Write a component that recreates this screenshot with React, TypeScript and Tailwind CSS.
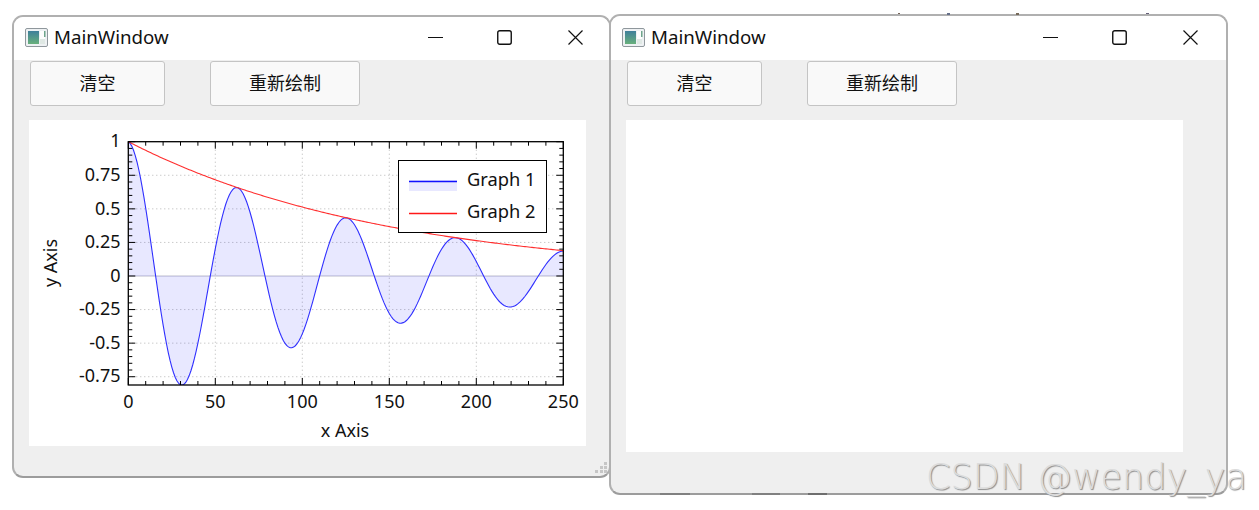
const FONT = "font-['Noto_Sans','Noto_Sans_CJK_SC',sans-serif]";

// plot geometry, in px inside the white plot area
const X0 = 99.3;
const X_SCALE = 1.74;
const Y_ONE = 21.7;
const Y_SCALE = 134.3;
const BOTTOM = 265;
const RIGHT = X0 + 250 * X_SCALE;

const px = (v: number) => X0 + v * X_SCALE;
const py = (v: number) => Y_ONE + (1 - v) * Y_SCALE;

function curve(fn: (i: number) => number) {
  const pts: string[] = [];
  for (let i = 0; i <= 250; i++) {
    pts.push(`${px(i).toFixed(2)},${py(fn(i)).toFixed(2)}`);
  }
  return pts;
}

const damped = (i: number) => Math.exp(-i / 150) * Math.cos(i / 10);
const envelope = (i: number) => Math.exp(-i / 150);

const xMajor = [0, 50, 100, 150, 200, 250];
const yMajor = [
  { v: 1, t: "1" },
  { v: 0.75, t: "0.75" },
  { v: 0.5, t: "0.5" },
  { v: 0.25, t: "0.25" },
  { v: 0, t: "0" },
  { v: -0.25, t: "-0.25" },
  { v: -0.5, t: "-0.5" },
  { v: -0.75, t: "-0.75" },
];
const xSub = Array.from({ length: 26 }, (_, i) => i * 10).filter((v) => v % 50 !== 0);
const ySub = Array.from({ length: 36 }, (_, i) => 1 - i * 0.05).filter(
  (v) => Math.abs(v * 4 - Math.round(v * 4)) > 0.01,
);

function Chart() {
  const blue = curve(damped);
  const fillPts = `${px(0)},${py(0)} ${blue.join(" ")} ${px(250)},${py(0)}`;
  return (
    <svg width="557" height="326" className="block" fontFamily="'Noto Sans','Noto Sans CJK SC',sans-serif" fontSize="18" fill="#111">
      <defs>
        <clipPath id="plot-clip">
          <rect x={X0} y={Y_ONE} width={RIGHT - X0} height={BOTTOM - Y_ONE} />
        </clipPath>
      </defs>

      {xMajor.slice(1, -1).map((v) => (
        <line key={v} x1={px(v)} x2={px(v)} y1={Y_ONE} y2={BOTTOM} stroke="#b4b4b4" strokeDasharray="1 3" />
      ))}
      {yMajor.slice(1).map(({ v }) => (
        <line key={v} x1={X0} x2={RIGHT} y1={py(v)} y2={py(v)} stroke={v === 0 ? "#bcbccc" : "#b4b4b4"} strokeDasharray={v === 0 ? undefined : "1 3"} />
      ))}

      <g clipPath="url(#plot-clip)">
        <polygon points={fillPts} fill="#0000ff" fillOpacity="0.09" />
        <polyline points={blue.join(" ")} fill="none" stroke="#2f2fff" strokeWidth="1.1" />
        <polyline points={curve(envelope).join(" ")} fill="none" stroke="#ff2f2f" strokeWidth="1.1" />
      </g>

      <rect x={X0} y={Y_ONE} width={RIGHT - X0} height={BOTTOM - Y_ONE} fill="none" stroke="#000" strokeWidth="1.3" />
      {xMajor.map((v) => (
        <g key={v} stroke="#000" strokeWidth="1">
          <line x1={px(v)} x2={px(v)} y1={BOTTOM} y2={BOTTOM - 7} />
          <line x1={px(v)} x2={px(v)} y1={Y_ONE} y2={Y_ONE + 7} />
        </g>
      ))}
      {xSub.map((v) => (
        <g key={v} stroke="#000" strokeWidth="1">
          <line x1={px(v)} x2={px(v)} y1={BOTTOM} y2={BOTTOM - 4} />
          <line x1={px(v)} x2={px(v)} y1={Y_ONE} y2={Y_ONE + 4} />
        </g>
      ))}
      {yMajor.map(({ v }) => (
        <g key={v} stroke="#000" strokeWidth="1">
          <line x1={X0} x2={X0 + 7} y1={py(v)} y2={py(v)} />
          <line x1={RIGHT} x2={RIGHT - 7} y1={py(v)} y2={py(v)} />
        </g>
      ))}
      {ySub.map((v) => (
        <g key={v} stroke="#000" strokeWidth="1">
          <line x1={X0} x2={X0 + 4} y1={py(v)} y2={py(v)} />
          <line x1={RIGHT} x2={RIGHT - 4} y1={py(v)} y2={py(v)} />
        </g>
      ))}

      {yMajor.map(({ v, t }) => (
        <text key={t} x="91.5" y={py(v) + 5.7} textAnchor="end">{t}</text>
      ))}
      {xMajor.map((v) => (
        <text key={v} x={px(v)} y="288" textAnchor="middle">{v}</text>
      ))}
      <text x="316" y="316.5" textAnchor="middle">x Axis</text>
      <text transform="translate(27.5 143) rotate(-90)" textAnchor="middle">y Axis</text>

      <rect x="369.5" y="40.5" width="148" height="72" fill="#fff" stroke="#000" />
      <rect x="380" y="60" width="48" height="11" fill="#0000ff" fillOpacity="0.09" />
      <line x1="380" x2="428" y1="61.5" y2="61.5" stroke="#1010ff" strokeWidth="1.4" />
      <line x1="380" x2="428" y1="93.5" y2="93.5" stroke="#ff1818" strokeWidth="1.4" />
      <text x="438" y="65.5" fontSize="18.3">Graph 1</text>
      <text x="438" y="97.5" fontSize="18.3">Graph 2</text>
    </svg>
  );
}

function AppIcon() {
  return (
    <svg width="23" height="19" viewBox="0 0 23 19" className="shrink-0">
      <defs>
        <linearGradient id="icon-fill" x1="0" y1="0" x2="0" y2="1">
          <stop offset="0" stopColor="#3f7f9a" />
          <stop offset="1" stopColor="#68b07c" />
        </linearGradient>
      </defs>
      <rect x="0.5" y="0.5" width="22" height="18" rx="1.5" fill="#eef1f3" stroke="#8f979c" />
      <rect x="3" y="3" width="11" height="13" fill="url(#icon-fill)" />
      <rect x="15" y="3" width="5" height="8" fill="#fdfdfd" />
      <rect x="19" y="3" width="1.5" height="6" fill="#6fa58c" />
      <rect x="15" y="11" width="5" height="5" fill="#dfe8e4" />
    </svg>
  );
}

function WindowControls({ padRight }: { padRight: string }) {
  return (
    <div className={`ml-auto flex items-center ${padRight}`}>
      <svg width="15" height="15" viewBox="0 0 15 15" stroke="#111" fill="none">
        <line x1="0" x2="15" y1="7.5" y2="7.5" />
      </svg>
      <svg width="15" height="15" viewBox="0 0 15 15" stroke="#111" fill="none" className="ml-[54px]">
        <rect x="0.75" y="0.75" width="13.5" height="13.5" rx="2" strokeWidth="1.4" />
      </svg>
      <svg width="15" height="15" viewBox="0 0 15 15" stroke="#111" strokeWidth="1.2" fill="none" className="ml-[56px]">
        <path d="M0.5 0.5L14.5 14.5M14.5 0.5L0.5 14.5" />
      </svg>
    </div>
  );
}

function QtButton({ label, width }: { label: string; width: string }) {
  return (
    <button className={`${width} h-[45px] rounded-[3px] border border-[#c4c4c4] bg-[#f9f9f9] text-[18px] text-[#111]`}>
      {label}
    </button>
  );
}

function MainWindow({
  frame,
  titleHeight,
  padRight,
  plotHeight,
  children,
}: {
  frame: string;
  titleHeight: string;
  padRight: string;
  plotHeight: string;
  children?: React.ReactNode;
}) {
  return (
    <div className={`relative flex shrink-0 flex-col overflow-hidden rounded-[11px] border-2 border-[#b0b0b0] border-b-[#9c9c9c] bg-[#efefef] ${frame}`}>
      <div className={`flex shrink-0 items-center bg-white pb-[2px] pl-[11px] ${titleHeight}`}>
        <AppIcon />
        <span className="ml-[6px] text-[18.7px] text-[#111]">MainWindow</span>
        <WindowControls padRight={padRight} />
      </div>
      <div className="mt-[1px] flex gap-[45px] pl-[16px]">
        <QtButton label="清空" width="w-[135px]" />
        <QtButton label="重新绘制" width="w-[150px]" />
      </div>
      <div className={`ml-[15px] mt-[14px] w-[557px] bg-white ${plotHeight}`}>{children}</div>
    </div>
  );
}

export default function App() {
  return (
    <div className={`relative h-[510px] w-[1259px] overflow-hidden bg-white ${FONT}`}>
      <div className="flex items-start pl-[12px] pt-[14px]">
        <div className="relative mt-[1px] shrink-0">
          <MainWindow frame="h-[463px] w-[599px]" titleHeight="h-[43px]" padRight="pr-[26px]" plotHeight="h-[326px]">
            <Chart />
          </MainWindow>
          {/* size grip */}
          <svg width="13" height="12" viewBox="0 0 13 12" fill="#c6c6c6" className="absolute bottom-[4px] right-[3px]">
            <rect x="9" y="0" width="3" height="3" />
            <rect x="5" y="4" width="3" height="3" />
            <rect x="9" y="4" width="3" height="3" />
            <rect x="0" y="8" width="3" height="3" />
            <rect x="5" y="8" width="3" height="3" />
            <rect x="9" y="8" width="3" height="3" />
          </svg>
        </div>
        <div className="relative z-10 -ml-[2px]">
          <MainWindow frame="h-[481px] w-[619px]" titleHeight="h-[44px]" padRight="pr-[28px]" plotHeight="h-[332px]" />
        </div>
      </div>
      {/* bits of the desktop peeking out behind the right window */}
      <div className="absolute left-[898px] top-[13px] z-20 h-[1px] w-[2px] bg-[#77665a]" />
      <div className="absolute left-[947px] top-[13px] z-20 h-[2px] w-[3px] bg-[#66708a]" />
      <div className="absolute left-[1016px] top-[13px] z-20 h-[2px] w-[3px] bg-[#776a5a]" />
      <div className="absolute left-[1146px] top-[13px] z-20 h-[1px] w-[3px] bg-[#66607a]" />
      <div className="absolute left-[660px] top-[493px] z-20 h-[2px] w-[30px] bg-[#808080]" />
      <div className="absolute left-[752px] top-[493px] z-20 h-[2px] w-[28px] bg-[#808080]" />
      <div className="absolute left-[808px] top-[493px] z-20 h-[2px] w-[19px] bg-[#6e6e6e]" />
      <span className="pointer-events-none absolute left-[926px] top-[453px] z-20 whitespace-nowrap font-['DejaVu_Sans',sans-serif] text-[35px] font-extralight leading-[48px] text-[#dcdcdc] [text-shadow:1px_1px_1px_#8c8c8c]">
        CSDN @wendy_ya
      </span>
    </div>
  );
}
